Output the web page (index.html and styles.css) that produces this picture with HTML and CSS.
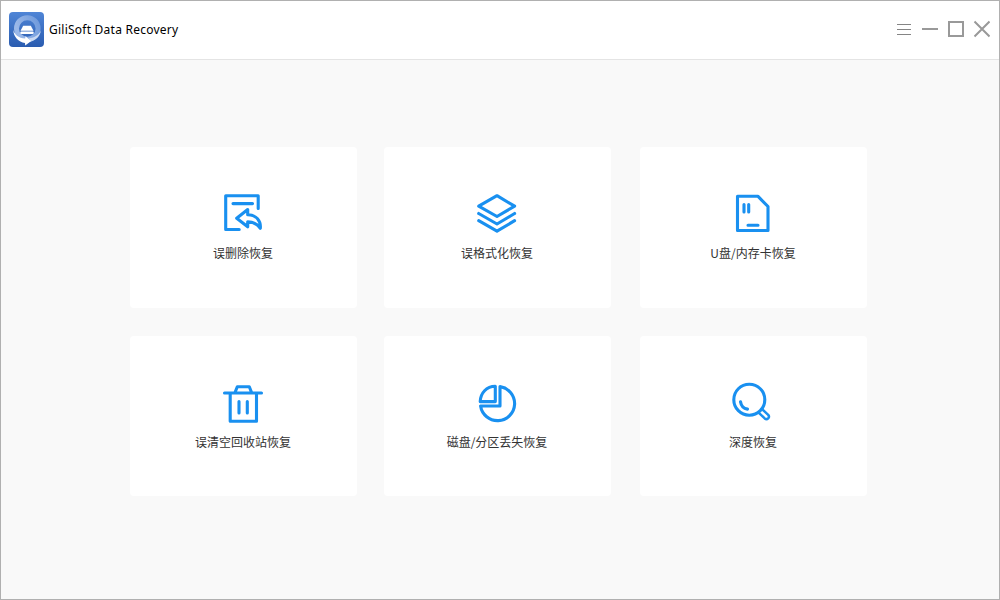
FILE: index.html
```html
<!DOCTYPE html>
<html lang="zh">
<head>
    <meta charset="UTF-8">
    <meta name="viewport" content="width=device-width, initial-scale=1.0">
    <title>GiliSoft Data Recovery</title>
    <link rel="stylesheet" href="styles.css">
</head>
<body>
    <div class="window">
        <header class="titlebar">
            <svg class="logo" width="35" height="35" viewBox="0 0 35 35">
                <defs>
                    <linearGradient id="logoBg" x1="0" y1="0" x2="0" y2="1">
                        <stop offset="0" stop-color="#4f85d6"/>
                        <stop offset="1" stop-color="#2a5cb0"/>
                    </linearGradient>
                    <linearGradient id="logoRing" x1="1" y1="0" x2="0" y2="0.4">
                        <stop offset="0" stop-color="#6f9adc"/>
                        <stop offset="1" stop-color="#9ab8e8"/>
                    </linearGradient>
                </defs>
                <rect width="35" height="35" rx="4" fill="url(#logoBg)"/>
                <circle cx="18.300" cy="16.500" r="10.800" fill="none" stroke="url(#logoRing)" stroke-width="5"/>
                <path d="M21.500 29.500c5.500-1.200 9.500-5.200 10.500-11-2.200 4.300-6.200 7.300-12 7.700z" fill="#c9d9f3"/>
                <path d="M4.200 17.500c.8 4.700 5.300 8.700 12 9l.3-2.300 5.700 4.800-6 4.500-.2-2.600C9.500 30.200 4.500 25 4.200 17.500z" fill="#fff"/>
                <path d="M14.200 13.800h7.600l2.700 5H11.500z" fill="#fff"/>
                <rect x="11.300" y="19.500" width="13.400" height="2.500" rx="1" fill="#fff"/>
            </svg>
            <span class="title">GiliSoft Data Recovery</span>
            <svg class="controls" width="94" height="18" viewBox="0 0 94 18">
                <path d="M1 4.500h14M1 9.500h14M1 14.500h14" stroke="#858585"/>
                <path d="M26 9h16" stroke="#999" stroke-width="2"/>
                <rect x="53" y="2" width="14" height="14" fill="none" stroke="#999" stroke-width="2"/>
                <path d="M78.500 1.500l15 15M93.500 1.500l-15 15" stroke="#999" stroke-width="2"/>
            </svg>
        </header>

        <main class="cards">
            <div class="card">
                <svg class="icon" viewBox="0 0 45 44">
                    <path d="M37.200 17.500V4.700H4.700v33.800h13.500M12 12.600h19.500"/>
                    <path d="M26.700 18.500L15.700 27.300l11 8.500v-5c5 0 9.300 2 12.600 6.500.8-7.500-4-13.500-12.600-13.500z"/>
                </svg>
                <span class="label">误删除恢复</span>
            </div>
            <div class="card">
                <svg class="icon" viewBox="0 0 45 44">
                    <path d="M22 4.700l17.600 10.500L22 25.500 3.700 15.200z"/>
                    <path d="M3.700 22.500L22 33l17.600-10.500M3.700 29.700L22 40.200l17.600-10.500"/>
                </svg>
                <span class="label">误格式化恢复</span>
            </div>
            <div class="card">
                <svg class="icon" viewBox="0 0 45 44">
                    <path d="M6.500 5.200h20.300L37 15.500v24H6.500z"/>
                    <path d="M13 13.500v7.500M17.700 13.500v7.500M17 34.300h10"/>
                </svg>
                <span class="label">U盘/内存卡恢复</span>
            </div>
            <div class="card">
                <svg class="icon" viewBox="0 0 45 44">
                    <path d="M3.500 13h37M9.200 13v28.300H35.500V13M14 12.500l2.300-5.800h12l2.300 5.800"/>
                    <path d="M18 21.500v11.500M26.300 21.500v11.500"/>
                </svg>
                <span class="label">误清空回收站恢复</span>
            </div>
            <div class="card">
                <svg class="icon" viewBox="0 0 45 44">
                    <path d="M20.300 6.300v15.300H5.200c.3-8.500 6.300-15.300 15.100-15.300z"/>
                    <path d="M25 6.600A17.100 17.100 0 1 1 5.600 26H25z"/>
                </svg>
                <span class="label">磁盘/分区丢失恢复</span>
            </div>
            <div class="card">
                <svg class="icon" viewBox="0 0 45 44">
                    <circle cx="18.300" cy="19.700" r="15.500"/>
                    <path d="M9.500 21.700c.6 4 3.200 6.800 7 7.400"/>
                    <path class="thin" d="M27.600 32.600l6.100 5.800c2.500 2 5.600-1 3.500-3.500l-6.100-5.800"/>
                </svg>
                <span class="label">深度恢复</span>
            </div>
        </main>
    </div>
</body>
</html>
```
FILE: styles.css
```css
body {
    margin: 0;
    font-family: "Noto Sans", "Noto Sans CJK SC", sans-serif;
}

.window {
    box-sizing: border-box;
    width: 1000px;
    height: 600px;
    border: 1px solid #b0b0b0;
    background-color: #f9f9f9;
}

.titlebar {
    display: flex;
    align-items: center;
    box-sizing: border-box;
    height: 59px;
    padding: 0 9px 2px 8px;
    border-bottom: 1px solid #e4e4e4;
    background-color: #fff;
}

.title {
    margin-left: 5px;
    font-size: 12px;
    letter-spacing: 0.240px;
    color: #000;
}

.controls {
    margin-left: auto;
}

.cards {
    display: grid;
    grid-template-columns: 254px 256px 227px;
    grid-template-rows: 161px 160px;
    row-gap: 28px;
    padding: 87px 0 0 129px;
}

.card {
    display: flex;
    flex-direction: column;
    align-items: center;
    box-sizing: border-box;
    width: 227px;
    padding-top: 44px;
    border-radius: 4px;
    background-color: #fff;
}

.icon {
    width: 45px;
    height: 44px;
    fill: none;
    stroke: #1990f0;
    stroke-width: 3.1;
    stroke-linecap: round;
    stroke-linejoin: round;
}

.thin {
    stroke-width: 2.5;
}

.label {
    margin-top: 9px;
    padding-right: 1px;
    font-family: "Noto Sans CJK SC", sans-serif;
    font-size: 12px;
    line-height: 18px;
    color: #333;
}
```
